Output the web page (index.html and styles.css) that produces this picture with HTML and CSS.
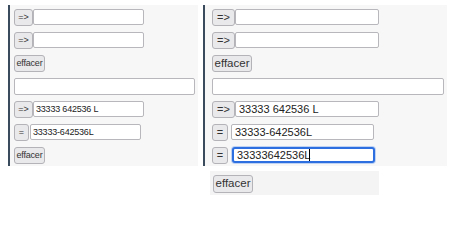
FILE: index.html
```html
<!DOCTYPE html>
<html lang="fr">
<head>
<meta charset="utf-8">
<title>Formulaire</title>
<link rel="stylesheet" href="styles.css">
</head>
<body>
<div class="stage">
  <section class="panel panel-left">
    <div class="row"><button class="btn btn-go">=&gt;</button><input class="field f-std" type="text"></div>
    <div class="row"><button class="btn btn-go">=&gt;</button><input class="field f-std" type="text"></div>
    <div class="row"><button class="btn btn-clear">effacer</button></div>
    <div class="row"><input class="field f-wide" type="text"></div>
    <div class="row"><button class="btn btn-go">=&gt;</button><input class="field f-std" type="text" value="33333 642536 L"></div>
    <div class="row gap-eq"><button class="btn btn-eq">=</button><input class="field f-std" type="text" value="33333-642536L"></div>
    <div class="row"><button class="btn btn-clear">effacer</button></div>
  </section>
  <div class="col-right">
    <section class="panel panel-right">
      <div class="row"><button class="btn btn-go">=&gt;</button><input class="field f-std" type="text"></div>
      <div class="row"><button class="btn btn-go">=&gt;</button><input class="field f-std" type="text"></div>
      <div class="row"><button class="btn btn-clear">effacer</button></div>
      <div class="row"><input class="field f-wide" type="text"></div>
      <div class="row"><button class="btn btn-go">=&gt;</button><input class="field f-std" type="text" value="33333 642536 L"></div>
      <div class="row gap-eq"><button class="btn btn-eq">=</button><input class="field f-eq" type="text" value="33333-642536L"></div>
      <div class="row gap-eq2"><button class="btn btn-eq">=</button><span class="field f-eq focus">33333642536L<span class="caret"></span></span></div>
    </section>
    <div class="extra"><button class="btn btn-clear">effacer</button></div>
  </div>
</div>
</body>
</html>
```

FILE: styles.css
```css
html, body {
  margin: 0;
  padding: 0;
  background: #ffffff;
}
body {
  width: 459px;
  height: 205px;
  overflow: hidden;
  font-family: "Liberation Sans", Arial, sans-serif;
  color: #222;
}
.stage {
  display: flex;
  align-items: flex-start;
  padding: 5px 0 0 8px;
}
.panel {
  box-sizing: border-box;
  display: flex;
  flex-direction: column;
  gap: 6px;
  background: #f7f7f7;
  border-left: 2px solid #3a4b5e;
  height: 161px;
  padding: 4px 0 0 0;
}
.row {
  display: flex;
  align-items: stretch;
  height: 17px;
}
.btn {
  box-sizing: border-box;
  margin: 0;
  padding: 0;
  height: 17px;
  background: #e9e9ec;
  border: 1px solid #b3b3b8;
  border-radius: 3px;
  color: #333;
  font-family: inherit;
  line-height: 1;
  cursor: pointer;
}
.field {
  box-sizing: border-box;
  margin: 0;
  height: 16px;
  background: #fff;
  border: 1px solid #b8b8bc;
  border-radius: 2px;
  color: #222;
  font-family: inherit;
  outline: none;
  display: flex;
  align-items: center;
}

/* left panel (smaller scale) */
.panel-left {
  width: 190px;
  padding-left: 4px;
}
.panel-left .btn { font-size: 9px; }
.panel-left .field { font-size: 9px; padding: 0 2px; letter-spacing: -0.2px; }
.panel-left .btn-go { width: 19px; }
.panel-left .btn-eq { width: 15px; }
.panel-left .btn-clear { width: 31px; letter-spacing: -0.2px; }
.panel-left .f-std { width: 111px; }
.panel-left .f-wide { width: 181px; height: 17px; }
.panel-left .gap-eq { gap: 1px; }

/* right column */
.col-right {
  display: flex;
  flex-direction: column;
  margin-left: 5px;
}
.panel-right {
  width: 244px;
  padding-left: 7px;
}
.panel-right .btn { font-size: 11px; }
.panel-right .field { font-size: 11px; padding: 0 3px; }
.panel-right .btn-go { width: 23px; }
.panel-right .btn-eq { width: 16px; }
.panel-right .btn-clear { width: 40px; font-size: 11.5px; }
.panel-right .f-std { width: 144px; }
.panel-right .f-eq { width: 143px; }
.panel-right .f-wide { width: 232px; height: 17px; }
.panel-right .gap-eq { gap: 3px; }
.panel-right .gap-eq2 { gap: 4px; }

.focus {
  border: 2px solid #2d6fe0;
  border-radius: 3px;
  box-shadow: 0 0 0 1px rgba(120, 165, 240, 0.45);
  padding: 0 2px;
}
.caret {
  display: inline-block;
  width: 1px;
  height: 12px;
  background: #000;
  margin-left: -1px;
}

.extra {
  box-sizing: border-box;
  margin: 5px 0 0 7px;
  width: 169px;
  height: 24px;
  background: #f4f4f4;
  padding: 2px 3px;
}
.extra .btn {
  width: 40px;
  height: 18px;
  font-size: 11.5px;
}
```
